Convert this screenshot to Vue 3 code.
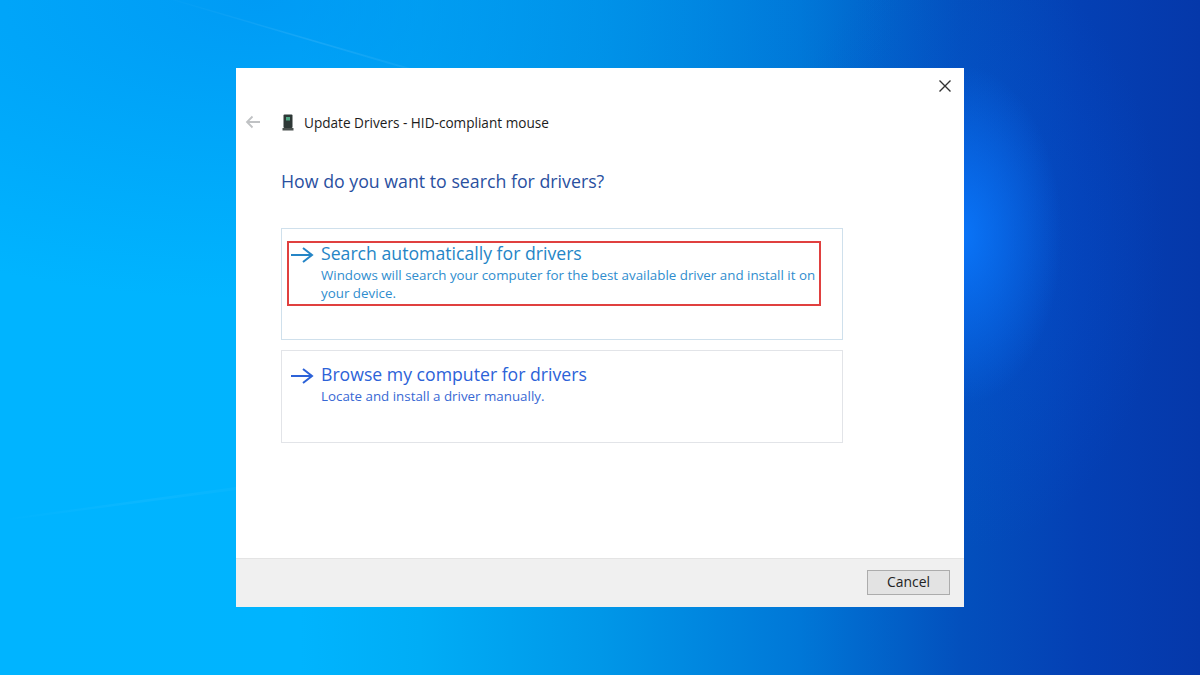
<script setup>
const options = [
  { title: 'Search automatically for drivers', text: 'Windows will search your computer for the best available driver and install it on your device.', cls: 'first' },
  { title: 'Browse my computer for drivers', text: 'Locate and install a driver manually.', cls: 'second' }
]
</script>

<template>
  <div class="desktop">
    <svg class="beams" viewBox="0 0 1200 675" width="1200" height="675" aria-hidden="true">
      <defs>
        <linearGradient id="beam" x1="0" y1="0" x2="1" y2="0">
          <stop offset="0" stop-color="#fff" stop-opacity="0.01" />
          <stop offset="0.6" stop-color="#fff" stop-opacity="0.09" />
          <stop offset="1" stop-color="#fff" stop-opacity="0.05" />
        </linearGradient>
      </defs>
      <polygon points="172,0 176,0 410,68 403,68" fill="url(#beam)" />
      <polygon points="10,518 236,487 236,490 10,520" fill="url(#beam)" opacity="0.5" />
    </svg>
    <main class="dialog">
      <div class="body">
        <div class="close-row">
          <svg class="close" width="14" height="14" viewBox="0 0 14 14">
            <path d="M1.5 1.5 L12.5 12.5 M12.5 1.5 L1.5 12.5" stroke="#333" stroke-width="1.4" fill="none" />
          </svg>
        </div>
        <header class="head">
          <svg class="back" width="16" height="14" viewBox="0 0 16 14">
            <path d="M15 7 H2 M7.5 1.5 L2 7 L7.5 12.5" stroke="#c0c2c4" stroke-width="1.8" fill="none" />
          </svg>
          <svg class="device" width="12" height="17" viewBox="0 0 12 17">
            <rect x="1.5" y="0.5" width="9" height="13.5" rx="1" fill="#2e3836" />
            <rect x="4" y="3" width="4" height="3.5" fill="#4fa785" />
            <rect x="0.5" y="14" width="11" height="2.5" fill="#4c5250" />
          </svg>
          <span class="head-title">Update Drivers - HID-compliant mouse</span>
        </header>
        <h1 class="question">How do you want to search for drivers?</h1>
        <div class="options">
          <section v-for="o in options" :key="o.title" class="card" :class="o.cls">
            <svg class="arrow" width="24" height="16" viewBox="0 0 24 16">
              <path d="M1 8 H22 M13 1 L22 8 L13 15" stroke="currentColor" stroke-width="2" fill="none" />
            </svg>
            <div class="copy">
              <div class="opt-title">{{ o.title }}</div>
              <p class="opt-text">{{ o.text }}</p>
            </div>
            <div v-if="o.cls === 'first'" class="mark"></div>
          </section>
        </div>
      </div>
      <footer class="foot">
        <button class="cancel" type="button">Cancel</button>
      </footer>
    </main>
  </div>
</template>

<style>
html, body { margin: 0; padding: 0; overflow: hidden; }
</style>

<style scoped>
.desktop {
  position: relative;
  width: 1200px;
  height: 675px;
  overflow: hidden;
  display: flex;
  justify-content: center;
  align-items: flex-start;
  padding-top: 68px;
  box-sizing: border-box;
  font-family: "Open Sans", "Noto Sans", sans-serif;
  background:
    radial-gradient(ellipse 100px 170px at 962px 235px, rgba(10, 118, 250, 0.95), rgba(10, 110, 240, 0) 100%),
    radial-gradient(ellipse 200px 300px at 965px 250px, rgba(6, 84, 215, 0.5), rgba(6, 84, 215, 0) 100%),
    radial-gradient(ellipse 640px 300px at 260px 0, rgba(0, 130, 235, 0.5), rgba(0, 130, 235, 0) 100%),
    linear-gradient(90deg, #00b4ff 0, #00b4fe 300px, #00adf6 420px, #0097e8 600px, #0077d7 800px, #0350bd 960px, #0440b4 1080px, #0538aa 1200px);
}
.beams { position: absolute; left: 0; top: 0; }
.dialog {
  position: relative;
  width: 728px;
  height: 539px;
  background: #fff;
  display: flex;
  flex-direction: column;
}
.body { flex: 1; padding: 0 121px 0 45px; box-sizing: border-box; }
.close-row { display: flex; justify-content: flex-end; margin-right: -109px; padding-top: 11px; height: 14px; }
.head { display: flex; align-items: center; margin-left: -36px; margin-top: 12px; height: 34px; }
.back { margin-right: 21px; }
.device { margin-right: 10px; }
.head-title { font-size: 13.6px; color: #1c1c1c; white-space: nowrap; }
.question {
  margin: 29px 0 0;
  font-size: 17.76px;
  line-height: 26px;
  font-weight: 400;
  color: #2a50a0;
  white-space: nowrap;
}
.options { margin-top: 34px; display: flex; flex-direction: column; gap: 10px; }
.card {
  position: relative;
  display: flex;
  align-items: flex-start;
  box-sizing: border-box;
  padding: 0 8px;
  background: #fff;
}
.card.first { height: 112px; border: 1px solid #cfe0ec; color: #2585c6; padding-top: 12px; }
.card.second { height: 93px; border: 1px solid #e2e4e8; color: #2c62d8; padding-top: 11px; }
.arrow { flex: none; margin-top: 6px; margin-right: 7px; }
.copy { width: 505px; }
.opt-title { font-size: 17.66px; line-height: 25px; white-space: nowrap; }
.opt-text { margin: 0; font-size: 13.35px; line-height: 18px; }
.first .opt-text { color: #2f8dce; }
.second .opt-text { color: #3768d4; }
.mark {
  position: absolute;
  left: 5px;
  top: 12px;
  width: 534px;
  height: 65px;
  box-sizing: border-box;
  border: 2px solid #e0403f;
}
.foot {
  height: 49px;
  background: #f0f0f0;
  border-top: 1px solid #e4e4e4;
  box-sizing: border-box;
  display: flex;
  justify-content: flex-end;
  align-items: flex-start;
  padding: 11px 14px 0 0;
}
.cancel {
  width: 83px;
  height: 25px;
  padding: 0 0 2px;
  background: #e3e3e3;
  border: 1px solid #acacac;
  color: #222;
  font-family: inherit;
  font-size: 13.9px;
  line-height: 20px;
}
</style>
